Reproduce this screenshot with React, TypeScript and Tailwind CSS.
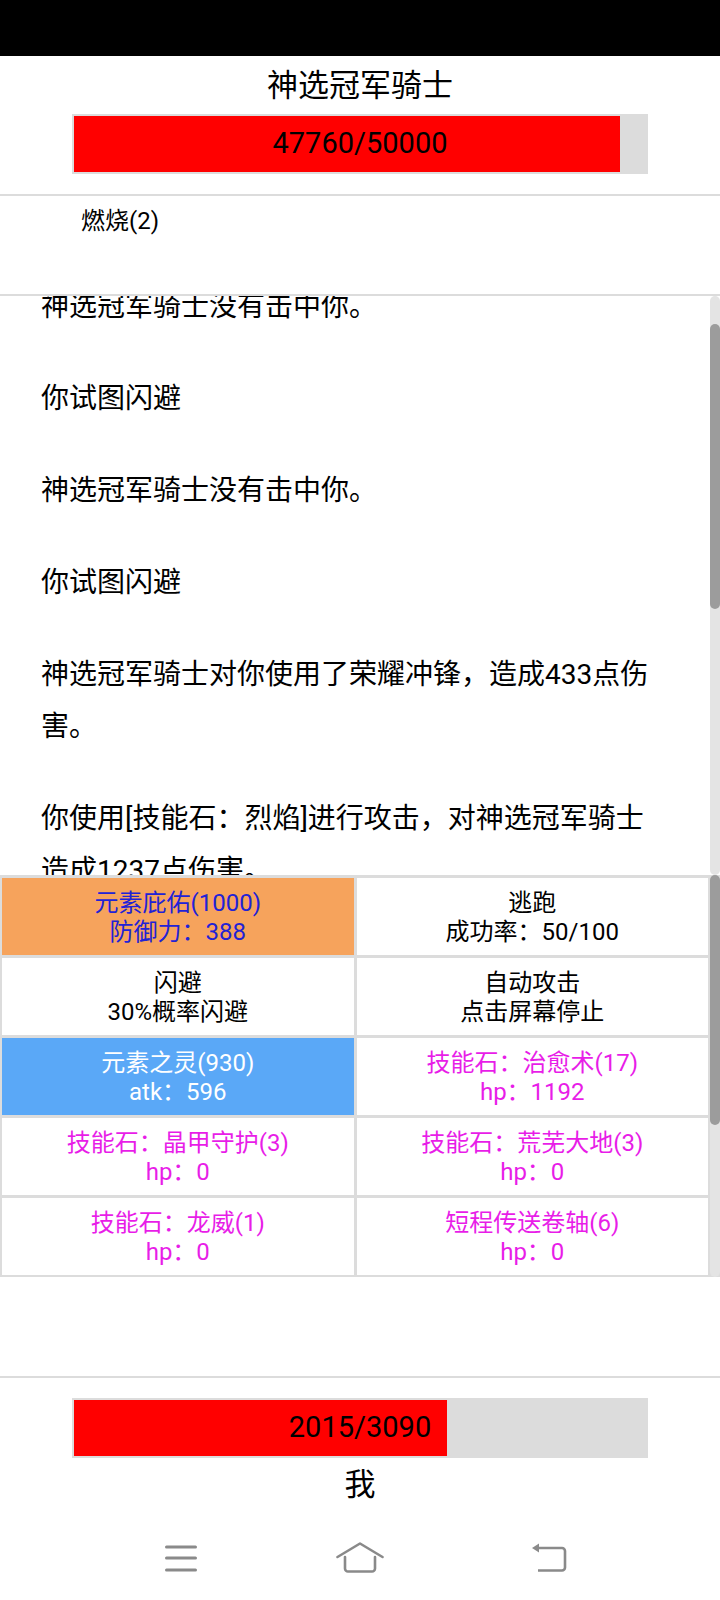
import React from 'react'

const FONT = "font-['Roboto','Noto_Sans_CJK_SC',sans-serif]"

const logLines = [
  '神选冠军骑士没有击中你。',
  '你试图闪避',
  '神选冠军骑士没有击中你。',
  '你试图闪避',
  '神选冠军骑士对你使用了荣耀冲锋，造成433点伤害。',
  '你使用[技能石：烈焰]进行攻击，对神选冠军骑士造成1237点伤害。',
  '你试图闪避',
]

type Cell = {
  title: string
  sub: string
  bg: string
  text: string
}

const cells: Cell[] = [
  { title: '元素庇佑(1000)', sub: '防御力：388', bg: 'bg-[#f6a35c]', text: 'text-[#2222d6]' },
  { title: '逃跑', sub: '成功率：50/100', bg: 'bg-white', text: 'text-black' },
  { title: '闪避', sub: '30%概率闪避', bg: 'bg-white', text: 'text-black' },
  { title: '自动攻击', sub: '点击屏幕停止', bg: 'bg-white', text: 'text-black' },
  { title: '元素之灵(930)', sub: 'atk：596', bg: 'bg-[#5aa8f7]', text: 'text-white' },
  { title: '技能石：治愈术(17)', sub: 'hp：1192', bg: 'bg-white', text: 'text-[#e81de8]' },
  { title: '技能石：晶甲守护(3)', sub: 'hp：0', bg: 'bg-white', text: 'text-[#e81de8]' },
  { title: '技能石：荒芜大地(3)', sub: 'hp：0', bg: 'bg-white', text: 'text-[#e81de8]' },
  { title: '技能石：龙威(1)', sub: 'hp：0', bg: 'bg-white', text: 'text-[#e81de8]' },
  { title: '短程传送卷轴(6)', sub: 'hp：0', bg: 'bg-white', text: 'text-[#e81de8]' },
]

function HpBar({ hp, max }: { hp: number; max: number }) {
  return (
    <div className="relative mx-auto h-[60px] w-[576px] bg-[#dcdcdc] p-[2px]">
      <div className="h-full bg-[#ff0000]" style={{ width: `${(hp / max) * 100}%` }} />
      <div className="absolute inset-0 flex items-center justify-center text-[29px] text-black">
        {hp}/{max}
      </div>
    </div>
  )
}

function Scrollbar({ thumbTop, thumbHeight }: { thumbTop: number; thumbHeight: number }) {
  return (
    <div className="absolute right-0 top-0 bottom-0 w-[10px] rounded-full bg-[#e4e4e4]">
      <div
        className="absolute right-0 w-[10px] rounded-full bg-[#9c9c9c]"
        style={{ top: thumbTop, height: thumbHeight }}
      />
    </div>
  )
}

export default function App() {
  return (
    <div className={`h-[1600px] w-[720px] overflow-hidden bg-white text-black ${FONT}`}>
      {/* status bar */}
      <div className="h-[56px] bg-black" />

      {/* enemy */}
      <div className="pt-[10px] pb-[20px]">
        <div className="h-[40px] text-center text-[31px] leading-[40px]">神选冠军骑士</div>
        <div className="mt-[8px]">
          <HpBar hp={47760} max={50000} />
        </div>
      </div>
      <div className="h-[2px] bg-[#dcdcdc]" />

      {/* buffs */}
      <div className="h-[98px] pl-[81px] pt-[11px] text-[24px] leading-[28px]">燃烧(2)</div>
      <div className="h-[2px] bg-[#dcdcdc]" />

      {/* battle log */}
      <div className="relative h-[579px] overflow-hidden">
        <div className="mt-[-15px] pl-[41px] pr-[59px]">
          {logLines.map((line, i) => (
            <p key={i} className="mb-[40px] text-[28px] leading-[52px]">
              {line}
            </p>
          ))}
        </div>
        <Scrollbar thumbTop={28} thumbHeight={285} />
      </div>

      {/* actions */}
      <div className="relative bg-[#dcdcdc] pt-[3px] pb-[2px] pl-[2px] pr-[12px]">
        <div className="grid grid-cols-2 gap-[3px]">
          {cells.map((c) => (
            <div
              key={c.title}
              className={`flex h-[77px] flex-col items-center justify-center pt-[3px] text-[24px] leading-[29px] ${c.bg} ${c.text}`}
            >
              <div>{c.title}</div>
              <div>{c.sub}</div>
            </div>
          ))}
        </div>
        <Scrollbar thumbTop={0} thumbHeight={250} />
      </div>

      <div className="h-[99px]" />
      <div className="h-[2px] bg-[#dcdcdc]" />

      {/* player */}
      <div className="pt-[20px]">
        <HpBar hp={2015} max={3090} />
        <div className="mt-[7px] h-[40px] text-center text-[31px] leading-[40px]">我</div>
      </div>

      {/* android nav bar */}
      <div className="flex h-[95px] items-start pt-[37px] pl-[164px] text-[#8a8a8a]">
        <svg width="34" height="32" viewBox="0 0 34 32" fill="none" stroke="currentColor" strokeWidth="3" strokeLinecap="round">
          <path d="M2.5 5H31.5M2.5 16H31.5M2.5 28H31.5" />
        </svg>
        <svg className="ml-[138px]" width="48" height="32" viewBox="0 0 48 32" fill="none" stroke="currentColor" strokeWidth="2.6" strokeLinecap="round" strokeLinejoin="round">
          <path d="M1.5 15L24 1.5L46.5 15" />
          <path d="M9 15V26.5a3 3 0 0 0 3 3H36a3 3 0 0 0 3-3V15" />
        </svg>
        <svg className="ml-[147px]" width="36" height="32" viewBox="0 0 36 32" fill="none" stroke="currentColor" strokeWidth="2.6" strokeLinejoin="round">
          <path d="M7 6H31a3 3 0 0 1 3 3V25.5a3 3 0 0 1-3 3H7" />
          <path d="M1 6L8 1.5V10.5Z" fill="currentColor" stroke="none" />
        </svg>
      </div>
    </div>
  )
}
